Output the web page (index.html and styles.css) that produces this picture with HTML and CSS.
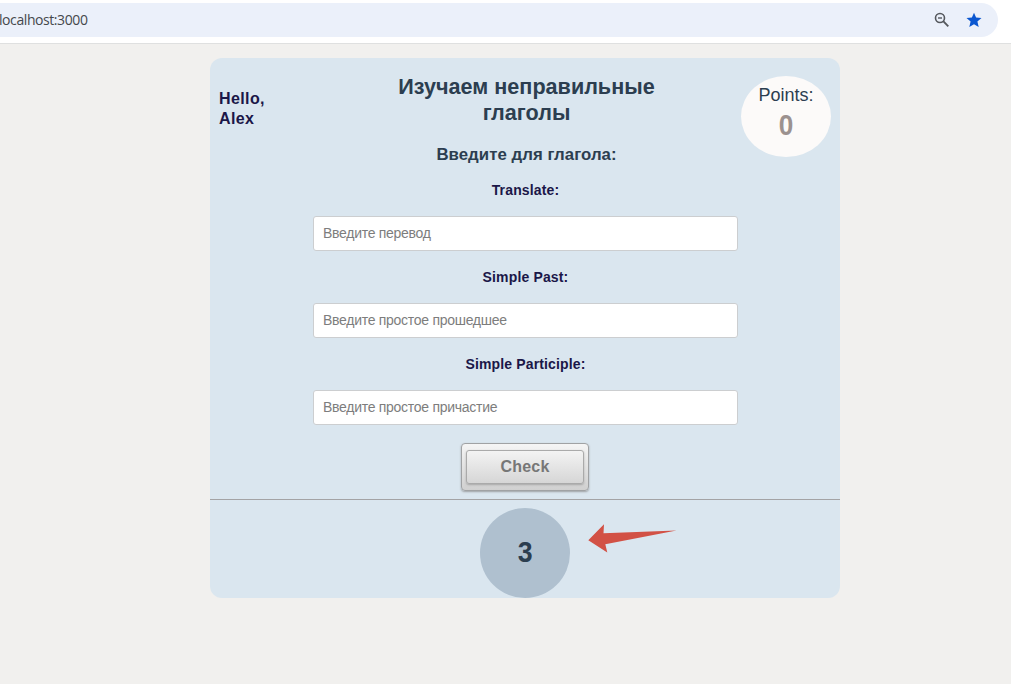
FILE: index.html
```html
<!DOCTYPE html>
<html lang="ru">
<head>
<meta charset="utf-8">
<title>Изучаем неправильные глаголы</title>
<link rel="stylesheet" href="styles.css">
</head>
<body>
<header class="browser-bar">
  <div class="address">
    <span class="url">localhost:3000</span>
    <svg class="icon-zoom" width="16" height="16" viewBox="0 0 16 16" fill="none" stroke="#55585d"><circle cx="6" cy="6" r="4.5" stroke-width="1.6"/><path d="M4 6h4" stroke-width="1.4"/><path d="M9.200 9.200l5.100 5.100" stroke-width="1.9"/></svg>
    <svg class="icon-star" width="16" height="16" viewBox="0 0 16 16"><path fill="#0b57d0" d="M8 .7l2.100 4.900 5.400.5-4.100 3.500 1.300 5.500L8 12.200l-4.700 2.900 1.300-5.500L.5 6.100l5.400-.5z"/></svg>
  </div>
</header>
<main class="card">
  <section class="quiz">
    <p class="greeting">Hello,<br>Alex</p>
    <form class="form">
      <h1 class="title">Изучаем неправильные<br>глаголы</h1>
      <h2 class="subtitle">Введите для глагола:</h2>
      <label class="label" for="translate">Translate:</label>
      <input class="field" id="translate" placeholder="Введите перевод">
      <label class="label" for="past">Simple Past:</label>
      <input class="field" id="past" placeholder="Введите простое прошедшее">
      <label class="label" for="participle">Simple Participle:</label>
      <input class="field" id="participle" placeholder="Введите простое причастие">
      <div class="button-frame"><button class="button" type="button">Check</button></div>
    </form>
    <div class="points"><span class="points-label">Points:</span><strong class="points-value">0</strong></div>
  </section>
  <footer class="timer-row">
    <div class="timer"><span class="timer-value">3</span></div>
    <svg class="arrow" width="90" height="30" viewBox="0 0 90 30"><path fill="#d25145" d="M.3 17.300L16 1.300l-.5 8.900L88.500 7.400 17.300 21.200l2 8.300z"/></svg>
  </footer>
</main>
</body>
</html>
```
FILE: styles.css
```css
* { box-sizing: border-box; }

body {
  margin: 0;
  height: 684px;
  overflow: hidden;
  background: #f1f0ee;
  font-family: "Liberation Sans", Arial, sans-serif;
  color: #2c3e50;
}

.browser-bar {
  height: 44px;
  padding: 3px 13px 0 0;
  background: #fff;
  border-bottom: 1px solid #dfe0e0;
}

.address {
  display: flex;
  align-items: center;
  height: 34px;
  padding-right: 16px;
  border-radius: 0 17px 17px 0;
  background: #ebf0fa;
}

.url {
  flex: 1;
  margin: -2px 0 0 -1px;
  font: 14px "Open Sans", sans-serif;
  letter-spacing: -0.42px;
  color: #45484c;
}

.icon-zoom { margin-right: 16px; }
.icon-star { display: block; }

.card {
  width: 630px;
  height: 540px;
  margin: 14px 0 0 210px;
  border-radius: 12px;
  background: #dae6ef;
}

.quiz {
  display: grid;
  grid-template-columns: 103px 425px 102px;
  height: 442px;
  border-bottom: 1px solid #a3a3a5;
}

.greeting {
  margin: 31px 0 0 9px;
  font-size: 16px;
  font-weight: bold;
  line-height: 20px;
  letter-spacing: 0.4px;
  color: #1b1748;
}

.form {
  display: flex;
  flex-direction: column;
  align-items: center;
  padding-top: 16px;
}

.title {
  margin: 0 0 0 2px;
  font-size: 21.6px;
  line-height: 26px;
  text-align: center;
}

.subtitle {
  margin: 19px 0 18px 2px;
  font-size: 16.8px;
  line-height: 20px;
  letter-spacing: 0.05px;
}

.label {
  height: 20px;
  margin-top: -3px;
  font-size: 14px;
  font-weight: bold;
  line-height: 20px;
  letter-spacing: 0.15px;
  color: #1b1748;
}

.field {
  width: 425px;
  height: 35px;
  margin: 16px 0 19px;
  padding: 0 8px 2px 9px;
  border: 1px solid #ccced0;
  border-radius: 3px;
  background: #fff;
  font: 14px "Liberation Sans", Arial, sans-serif;
  letter-spacing: -0.28px;
}

.field::placeholder { color: #7d7d7d; }

.button-frame {
  width: 128px;
  height: 48px;
  margin: -1px 1px 0 0;
  padding: 6px 4px;
  border: 1px solid #a0a2a4;
  border-radius: 4px;
  background: linear-gradient(#f5f5f5, #d0d0d0);
  box-shadow: 0 1px 2px #888b;
}

.button {
  display: block;
  width: 118px;
  height: 34px;
  padding: 0;
  border: 1px solid #aaa;
  border-radius: 3px;
  background: linear-gradient(#f3f3f3, #d6d6d6);
  box-shadow: 0 1px 2px #8889;
  font: bold 16px "Liberation Sans", Arial, sans-serif;
  letter-spacing: 0.2px;
  color: #777;
}

.points {
  display: flex;
  flex-direction: column;
  align-items: center;
  width: 90px;
  height: 81px;
  margin: 18px 0 0 3px;
  padding-top: 8px;
  border-radius: 50%;
  background: #fcfaf9;
}

.points-label {
  font-size: 18px;
  line-height: 22px;
}

.points-value {
  margin-top: 3px;
  font-size: 29px;
  line-height: 32px;
  color: #9b918f;
  transform: scaleX(0.9);
}

.timer-row {
  display: flex;
  padding: 8px 0 0 270px;
}

.timer {
  width: 90px;
  height: 90px;
  border-radius: 50%;
  background: #afc0cf;
  font-size: 29px;
  font-weight: bold;
  line-height: 89px;
  text-align: center;
}

.timer-value {
  display: inline-block;
  transform: scaleX(0.92);
}

.arrow { margin: 15px 0 0 18px; }
```
